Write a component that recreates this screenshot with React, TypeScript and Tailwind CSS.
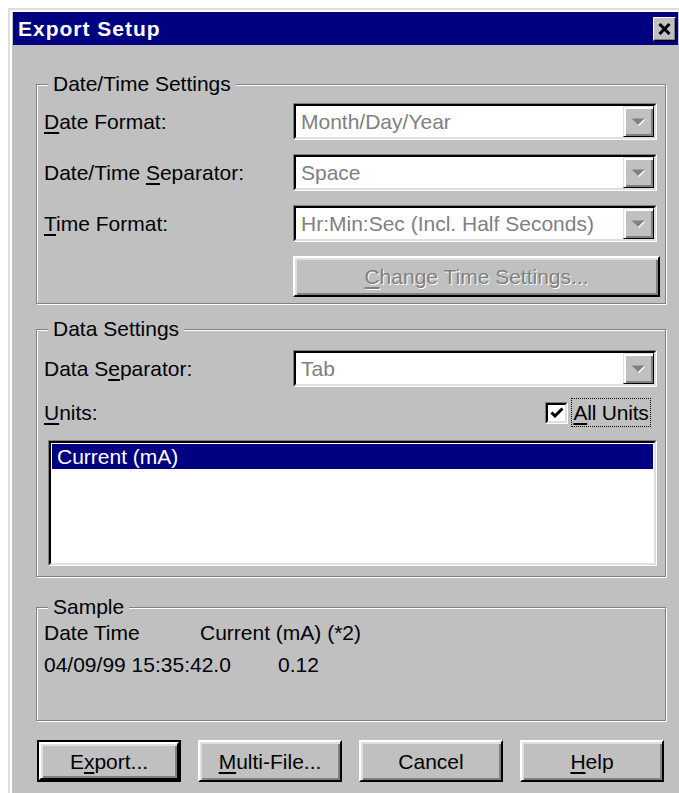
import React from "react";

function U({ children }: { children: React.ReactNode }) {
  return <span className="underline decoration-[2px] underline-offset-[3px]">{children}</span>;
}

// greyed-out drop arrow: a white copy under a grey triangle
function Arrow() {
  return (
    <svg width="17" height="10" viewBox="0 0 17 10">
      <path d="M2.5 2.5 L15.5 2.5 L9 9 Z" fill="#ffffff" />
      <path d="M1.5 1.5 L14.5 1.5 L8 8 Z" fill="#808080" />
    </svg>
  );
}

function DropButton() {
  return (
    <div className="w-[31px] h-full flex items-center justify-center bg-[#c0c0c0] border border-t-[#dfdfdf] border-l-[#dfdfdf] border-r-black border-b-black shadow-[inset_2px_2px_0_#fff,inset_-2px_-2px_0_#808080]">
      <Arrow />
    </div>
  );
}

function Combo({ value }: { value: string }) {
  return (
    <div className="h-[37px] w-[364px] flex border border-t-[#808080] border-l-[#808080] border-r-white border-b-white">
      <div className="flex-1 flex bg-white border-2 border-t-black border-l-black border-r-[#dfdfdf] border-b-[#dfdfdf]">
        <div className="flex-1 flex items-center pl-[5px] text-[#808080] whitespace-nowrap">{value}</div>
        <DropButton />
      </div>
    </div>
  );
}

function Group({
  title,
  className,
  children,
}: {
  title: string;
  className: string;
  children: React.ReactNode;
}) {
  return (
    <div
      className={`relative border border-[#808080] shadow-[inset_1px_1px_0_#fff,1px_1px_0_#fff] ${className}`}
    >
      <span className="absolute left-[11px] top-[-13px] bg-[#c0c0c0] px-[5px] leading-[24px] whitespace-nowrap">
        {title}
      </span>
      {children}
    </div>
  );
}

function PushButton({
  children,
  isDefault,
}: {
  children: React.ReactNode;
  isDefault?: boolean;
}) {
  const face = (
    <div className="flex-1 flex items-center justify-center bg-[#c0c0c0] border-2 border-t-white border-l-white border-r-black border-b-black shadow-[inset_2px_2px_0_#dfdfdf,inset_-2px_-2px_0_#808080] whitespace-nowrap">
      {children}
    </div>
  );
  return isDefault ? (
    <div className="w-[144px] h-[42px] flex border-2 border-black">{face}</div>
  ) : (
    <div className="w-[144px] h-[42px] flex">{face}</div>
  );
}

export default function App() {
  return (
    <div className="w-[679px] h-[793px] overflow-hidden bg-white font-['Liberation_Sans',Arial,sans-serif] text-[21px] text-black leading-none">
      <div className="ml-[8px] mt-[8px] w-[680px] h-[800px] bg-[#c0c0c0] pt-[4px] pl-[5px] shadow-[inset_2px_2px_0_#dfdfdf,inset_4px_4px_0_#fff]">
        {/* caption */}
        <div className="w-[665px] h-[33px] bg-[#000080] flex items-center justify-between pl-[5px] pr-[2px]">
          <span className="text-white font-bold tracking-[1px]">Export Setup</span>
          <div className="w-[23px] h-[24px] flex items-center justify-center bg-[#c0c0c0] border border-t-white border-l-white border-r-black border-b-black shadow-[inset_-1px_-1px_0_#808080]">
            <svg width="13" height="12" viewBox="0 0 13 12">
              <path d="M1.5 1 L11.5 11 M11.5 1 L1.5 11" stroke="#000" strokeWidth="3" />
            </svg>
          </div>
        </div>

        {/* Date/Time Settings */}
        <Group title="Date/Time Settings" className="ml-[23px] mt-[39px] w-[630px] h-[220px]">
          <div className="pt-[18px] pl-[7px] pr-[8px] flex flex-col gap-[14px]">
            <div className="flex items-center">
              <span className="w-[249px]">
                <U>D</U>ate Format:
              </span>
              <Combo value="Month/Day/Year" />
            </div>
            <div className="flex items-center">
              <span className="w-[249px]">
                Date/Time <U>S</U>eparator:
              </span>
              <Combo value="Space" />
            </div>
            <div className="flex items-center">
              <span className="w-[249px]">
                <U>T</U>ime Format:
              </span>
              <Combo value="Hr:Min:Sec (Incl. Half Seconds)" />
            </div>
            <div className="ml-[249px] w-[367px] h-[41px] flex">
              <div className="flex-1 flex items-center justify-center bg-[#c0c0c0] border-2 border-t-white border-l-white border-r-black border-b-black shadow-[inset_2px_2px_0_#dfdfdf,inset_-2px_-2px_0_#808080] text-[#808080] [text-shadow:1px_1px_0_#fff]">
                <span>
                  <U>C</U>hange Time Settings...
                </span>
              </div>
            </div>
          </div>
        </Group>

        {/* Data Settings */}
        <Group title="Data Settings" className="ml-[23px] mt-[25px] w-[630px] h-[248px]">
          <div className="pt-[20px] pl-[7px] pr-[8px]">
            <div className="flex items-center">
              <span className="w-[249px]">
                Data S<U>e</U>parator:
              </span>
              <Combo value="Tab" />
            </div>
            <div className="mt-[11px] h-[29px] flex items-center">
              <span className="flex-1">
                <U>U</U>nits:
              </span>
              <div className="w-[23px] h-[22px] flex border border-t-[#808080] border-l-[#808080] border-r-white border-b-white">
                <div className="flex-1 flex items-center justify-center bg-white border-2 border-t-black border-l-black border-r-[#dfdfdf] border-b-[#dfdfdf]">
                  <svg width="14" height="12" viewBox="0 0 14 12">
                    <path d="M1.5 5.5 L5 9 L12.5 1.5" stroke="#000" strokeWidth="3" fill="none" />
                  </svg>
                </div>
              </div>
              <span className="ml-[3px] mr-[6px] w-[80px] h-[29px] flex items-center justify-center border border-dotted border-black whitespace-nowrap tracking-[-0.2px]">
                <span>
                  <U>A</U>ll Units
                </span>
              </span>
            </div>
            <div className="mt-[13px] ml-[4px] w-[609px] h-[126px] flex border border-t-[#808080] border-l-[#808080] border-r-white border-b-white">
              <div className="flex-1 bg-white border-2 border-t-black border-l-black border-r-[#dfdfdf] border-b-[#dfdfdf] pt-[1px] px-[1px]">
                <div className="h-[25px] bg-[#000080] text-white flex items-center pl-[5px]">
                  Current (mA)
                </div>
              </div>
            </div>
          </div>
        </Group>

        {/* Sample */}
        <Group title="Sample" className="ml-[23px] mt-[30px] w-[630px] h-[114px]">
          <div className="pt-[9px] pl-[7px] leading-[32px]">
            <div className="flex">
              <span className="w-[156px]">Date Time</span>
              <span>Current (mA) (*2)</span>
            </div>
            <div className="flex">
              <span className="w-[234px]">04/09/99 15:35:42.0</span>
              <span>0.12</span>
            </div>
          </div>
        </Group>

        {/* command buttons */}
        <div className="ml-[24px] mt-[19px] flex gap-[17px]">
          <PushButton isDefault>
            <span>
              E<U>x</U>port...
            </span>
          </PushButton>
          <PushButton>
            <span>
              <U>M</U>ulti-File...
            </span>
          </PushButton>
          <PushButton>
            <span>Cancel</span>
          </PushButton>
          <PushButton>
            <span>
              <U>H</U>elp
            </span>
          </PushButton>
        </div>
      </div>
    </div>
  );
}
